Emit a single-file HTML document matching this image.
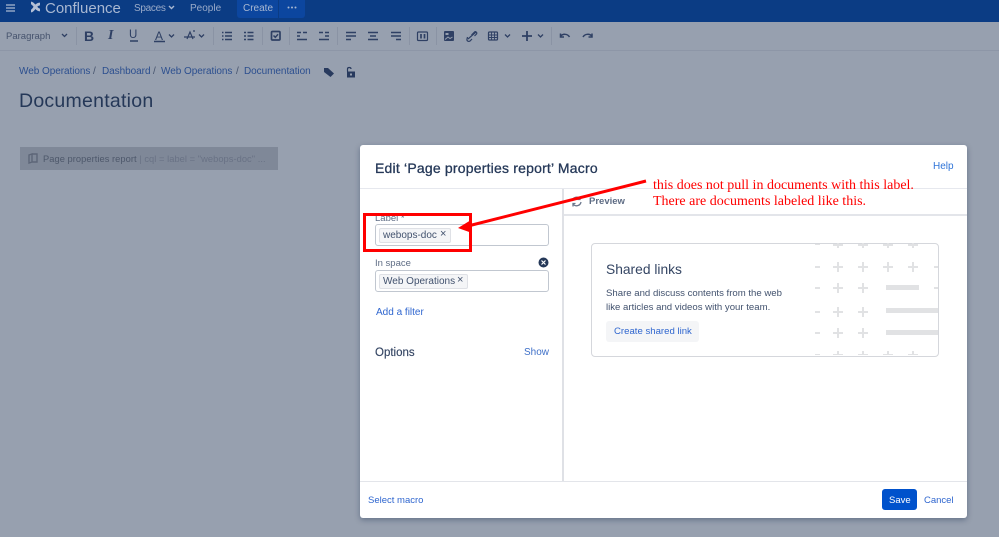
<!DOCTYPE html>
<html><head><meta charset="utf-8"><style>
html,body{margin:0;padding:0}
body{width:999px;height:537px;position:relative;overflow:hidden;background:#97a0af;font-family:"Liberation Sans",sans-serif;color:#172b4d}
.a{position:absolute;white-space:nowrap;line-height:1}
.r{position:absolute}
.sep{position:absolute;top:27px;height:18px;width:1px;background:#8a93a4}
.bc{color:#2c4f8f;font-size:10px;top:67px;letter-spacing:-.05px}
.ln{color:#0052cc;font-size:10px}
svg{position:absolute;overflow:visible}
.tag{position:absolute;background:#f4f5f7;border:1px solid #dfe1e6;border-radius:2px;height:13px;font-size:10px;line-height:13px;color:#42526e;white-space:nowrap;padding-left:3px;box-sizing:content-box}
.inp{position:absolute;left:375px;width:172px;border:1px solid #c1c7d0;border-radius:3px;background:#fff}
</style></head><body>
<div class="r" style="left:0;top:0;width:999px;height:22px;background:#0b3c84"></div>
<svg style="left:0;top:0" width="330" height="22" fill="none">
<path d="M6 5h9M6 8h9M6 11h9" stroke="#8fa3c4" stroke-width="1.500"/>
<path d="M31 3c3 0 5 7 9 7M31 11c3 0 4-7 9-7" stroke="#b4c0d6" stroke-width="2.800"/>
<path d="M169 6l2.500 2.500L174 6" stroke="#a9b8d2" stroke-width="1.400"/>
</svg>
<div class="a" style="left:45px;top:0.500px;font-size:15px;color:#a9b8d2">Confluence</div>
<div class="a" style="left:134px;top:3.500px;font-size:10px;color:#9aabc9;letter-spacing:-.3px">Spaces</div>
<div class="a" style="left:190px;top:3.500px;font-size:10px;color:#9aabc9">People</div>
<div class="r" style="left:237px;top:0;width:41px;height:18px;background:#0c469f;border-radius:0 0 0 3px"></div>
<div class="r" style="left:279px;top:0;width:26px;height:18px;background:#0c469f;border-radius:0 0 3px 0"></div>
<div class="a" style="left:243px;top:3.500px;font-size:10px;color:#a9b8d2">Create</div>
<svg style="left:279px;top:0" width="26" height="18"><circle cx="9.500" cy="7.500" r="1" fill="#a9b8d2"/><circle cx="13" cy="7.500" r="1" fill="#a9b8d2"/><circle cx="16.500" cy="7.500" r="1" fill="#a9b8d2"/></svg>

<div class="r" style="left:0;top:50px;width:999px;height:1px;background:#8d96a7"></div>
<div class="a" style="left:6px;top:32px;font-size:9.500px;color:#46536d">Paragraph</div>
<div class="sep" style="left:76px"></div><div class="sep" style="left:213px"></div><div class="sep" style="left:262px"></div><div class="sep" style="left:289px"></div><div class="sep" style="left:337px"></div><div class="sep" style="left:409px"></div><div class="sep" style="left:436px"></div><div class="sep" style="left:551px"></div>
<div class="a" style="left:84px;top:29px;font-size:14px;font-weight:bold;color:#2f4064">B</div>
<div class="a" style="left:108px;top:29px;font-size:14px;font-weight:bold;font-style:italic;font-family:'Liberation Serif',serif;color:#2f4064">I</div>
<div class="a" style="left:129px;top:30px;font-size:11.500px;color:#2f4064">U</div>
<div class="a" style="left:155px;top:30px;font-size:12px;color:#2f4064">A</div>
<svg style="left:0;top:22px" width="620" height="28" fill="none" stroke="#2f4064" stroke-width="1.500">
<path d="M62 12l2.500 2.500L67 12M169 12.500l2.500 2.500L174 12.500M199 12.500l2.500 2.500L204 12.500M505 12.500l2.500 2.500L510 12.500M538 12.500l2.500 2.500L543 12.500" stroke-width="1.300"/>
<path d="M130 19h8M154 19.500h11"/>
<path d="M187 17l3-7 3 7M184 15h11M193 9h2" stroke-width="1.200"/>
<path d="M225 10.500h7M225 14h7M225 17.500h7M222 10.500h1.500M222 14h1.500M222 17.500h1.500M247.500 10.500h6M247.500 14h6M247.500 17.500h6M244 10.500h2M244 14h2M244 17.500h2"/>
<rect x="271.500" y="9.500" width="8.500" height="8.500" rx="1" stroke-width="1.700"/><path d="M273.500 13.500l1.800 1.800 2.800-3"/>
<path d="M297 10.500h4M297 14h3M297 17.500h10M303 10.500h4M319 10.500h4M325 14h4M319 17.500h10M325 10.500h4"/>
<path d="M346 10.500h10M346 14h10M346 17.500h5M368 10.500h10M370 14h6M368 17.500h10M391 10.500h10M391 14h10M396 17.500h5" stroke-width="1.600"/>
<rect x="417.500" y="10" width="10" height="8.500" rx="1" stroke-width="1.200"/><path d="M421 12v4.500M424.500 12v4.500" stroke-width="1.700"/>
<rect x="444" y="9" width="10" height="10" rx="1" fill="#2f4064" stroke="none"/><path d="M445 17.500l3-2.500 2 1.500 2.500-1.500" stroke="#97a0af" stroke-width="1"/><rect x="445.500" y="11" width="3" height="2" fill="#97a0af" stroke="none"/>
<path d="M468 17l8-7M467.500 15l-.5 2c-.5 2 1.500 3 3 2l2-2M471.500 13l3-3c1-1 3 .5 2 2l-2 2" stroke-width="1.200"/>
<rect x="488.500" y="10" width="9" height="8" rx="1" stroke-width="1.200"/><path d="M488.500 13h9M488.500 15.500h9M491.500 10v8M494.500 10v8" stroke-width=".9"/>
<path d="M527 9v10M522 14h10" stroke-width="1.800"/>
<path d="M560.500 14.500c2-3 7-3 9 .5M560.500 11.500v3.500h3.500M592 14.500c-2-3-7-3-9 .5M592 11.500v3.500h-3.500" stroke-width="1.500"/>
</svg>

<div class="a bc" style="left:19px">Web Operations</div>
<div class="a bc" style="left:93px;color:#46536d">/</div>
<div class="a bc" style="left:102px">Dashboard</div>
<div class="a bc" style="left:153px;color:#46536d">/</div>
<div class="a bc" style="left:161px">Web Operations</div>
<div class="a bc" style="left:236px;color:#46536d">/</div>
<div class="a bc" style="left:244px">Documentation</div>
<svg style="left:320px;top:64px" width="40" height="16"><path d="M4 4h4l6 5.500-3.500 3.500L4 8z" fill="#283a5e"/><path d="M27 7.500h8v6h-8z" fill="#283a5e"/><rect x="30" y="9.500" width="2" height="2" fill="#97a0af"/><path d="M27.500 7.500V5c0-2 3.500-2 3.500 0" stroke="#283a5e" fill="none" stroke-width="1.200"/></svg>
<div class="a" style="left:19px;top:92px;font-size:19.500px;color:#253858;letter-spacing:.25px">Documentation</div>

<div class="r" style="left:20px;top:147px;width:258px;height:23px;background:#7f8898"></div>
<svg style="left:27px;top:152px" width="12" height="13" fill="none" stroke="#5d6678" stroke-width="1.400"><path d="M2 3v8l3-1V2zM5 2h5v8H5"/></svg>
<div class="a" style="left:43px;top:155px;font-size:9.300px;color:#4e586b;letter-spacing:.05px">Page properties report <span style="color:#697285">| cql = label = "webops-doc" ...</span></div>

<div class="r" style="left:360px;top:145px;width:607px;height:373px;background:#fff;border-radius:3px;box-shadow:0 2px 6px rgba(9,30,66,.35)"></div>
<div class="a" style="left:375px;top:161px;font-size:14px;font-weight:500;color:#253858;-webkit-text-stroke:.3px #253858;letter-spacing:.2px">Edit ‘Page properties report’ Macro</div>
<div class="a ln" style="left:933px;top:162px;color:#2f74d8">Help</div>
<div class="r" style="left:360px;top:188px;width:607px;height:1px;background:#e6e8ee"></div>
<div class="r" style="left:562px;top:189px;width:1.500px;height:292px;background:#dfe1e6"></div>
<div class="r" style="left:564px;top:214px;width:403px;height:1.500px;background:#e3e5ea"></div>
<div class="r" style="left:360px;top:481px;width:607px;height:1px;background:#e3e5ea"></div>
<svg style="left:570px;top:195px" width="13" height="13" fill="none" stroke="#6b778c" stroke-width="1.300"><path d="M2 6a4.500 4.500 0 0 1 8-2M11 7a4.500 4.500 0 0 1-8 2M10 1.500V4.500H7.500M3 11.500V8.500H5.500"/></svg>
<div class="a" style="left:589px;top:197px;font-size:9.500px;font-weight:bold;color:#5e6c84">Preview</div>

<div class="a" style="left:375px;top:214px;font-size:9.500px;color:#5e6c84">Label *</div>
<div class="inp" style="top:224px;height:20px"></div>
<div class="tag" style="left:379px;top:228px;width:67px">webops-doc</div>
<div class="a" style="left:440px;top:229px;font-size:11px;color:#42526e">×</div>
<div class="a" style="left:375px;top:259px;font-size:9.500px;color:#5e6c84">In space</div>
<svg style="left:538px;top:257px" width="11" height="11"><circle cx="5.500" cy="5.500" r="5" fill="#253858"/><path d="M3.500 3.500l4 4M7.500 3.500l-4 4" stroke="#fff" stroke-width="1.200"/></svg>
<div class="inp" style="top:270px;height:20px"></div>
<div class="tag" style="left:379px;top:274px;width:84px">Web Operations</div>
<div class="a" style="left:457px;top:275px;font-size:11px;color:#42526e">×</div>
<div class="a ln" style="left:376px;top:308px;color:#2f66cf">Add a filter</div>
<div class="a" style="left:375px;top:348px;font-size:11.500px;color:#344563;-webkit-text-stroke:.15px #344563">Options</div>
<div class="a ln" style="left:524px;top:348px;color:#3f70c8">Show</div>

<div class="r" style="left:591px;top:243px;width:346px;height:112px;border:1px solid #d5d7dc;border-radius:4px"></div>
<svg style="left:811px;top:243px" width="128" height="114" fill="#e1e2e4">
<path d="M4 23h5v2H4zM22 23h4v-4h2v4h4v2h-4v4h-2v-4h-4zM47 23h4v-4h2v4h4v2h-4v4h-2v-4h-4zM72 23h4v-4h2v4h4v2h-4v4h-2v-4h-4zM97 23h4v-4h2v4h4v2h-4v4h-2v-4h-4zM123 23h4v2h-4z"/>
<path d="M4 44h5v2H4zM22 44h4v-4h2v4h4v2h-4v4h-2v-4h-4zM47 44h4v-4h2v4h4v2h-4v4h-2v-4h-4zM75 42h33v5H75zM123 44h4v2h-4z"/>
<path d="M4 68h5v2H4zM22 68h4v-4h2v4h4v2h-4v4h-2v-4h-4zM47 68h4v-4h2v4h4v2h-4v4h-2v-4h-4zM75 65h52v5H75z"/>
<path d="M4 89h5v2H4zM22 89h4v-4h2v4h4v2h-4v4h-2v-4h-4zM47 89h4v-4h2v4h4v2h-4v4h-2v-4h-4zM75 87h52v5H75z"/>
<path d="M4 1h5v1H4zM22 1h4v-1h2v1h4v2h-4v2h-2v-2h-4zM47 1h4v-1h2v1h4v2h-4v2h-2v-2h-4zM72 1h4v-1h2v1h4v2h-4v2h-2v-2h-4zM97 1h4v-1h2v1h4v2h-4v2h-2v-2h-4z"/>
<path d="M4 111h5v1H4zM22 111h4v-3h2v3h4v1H22zM47 111h4v-3h2v3h4v1H47zM72 111h4v-3h2v3h4v1H72zM97 111h4v-3h2v3h4v1H97z"/>
</svg>
<div class="a" style="left:606px;top:263px;font-size:13.800px;color:#344563">Shared links</div>
<div class="a" style="left:606px;top:289px;font-size:9.600px;color:#42526e">Share and discuss contents from the web</div>
<div class="a" style="left:606px;top:303px;font-size:9.600px;color:#42526e">like articles and videos with your team.</div>
<div class="r" style="left:606px;top:321px;width:93px;height:21px;background:#f4f5f7;border-radius:3px"></div>
<div class="a ln" style="left:614px;top:327px;font-size:9.600px;color:#2f66cf">Create shared link</div>

<div class="a ln" style="left:368px;top:496px;font-size:9.500px;color:#2f66cf">Select macro</div>
<div class="r" style="left:882px;top:489px;width:35px;height:21px;background:#0052cc;border-radius:3px"></div>
<div class="a" style="left:889px;top:496px;font-size:9.500px;color:#fff">Save</div>
<div class="a ln" style="left:924px;top:496px;font-size:9.500px;color:#2f66cf">Cancel</div>

<svg style="left:0;top:0" width="999" height="537" fill="none">
<rect x="364.500" y="214.500" width="106" height="36" stroke="#f00" stroke-width="3"/>
<path d="M646 181L468 226" stroke="#f00" stroke-width="3"/>
<path d="M458 228L471 220L472 233Z" fill="#f00"/>
</svg>
<div class="a" style="left:653px;top:179px;font-family:'Liberation Serif',serif;font-size:14px;color:#f00">this does not pull in documents with this label.</div>
<div class="a" style="left:653px;top:195px;font-family:'Liberation Serif',serif;font-size:14px;color:#f00">There are documents labeled like this.</div>
</body></html>
